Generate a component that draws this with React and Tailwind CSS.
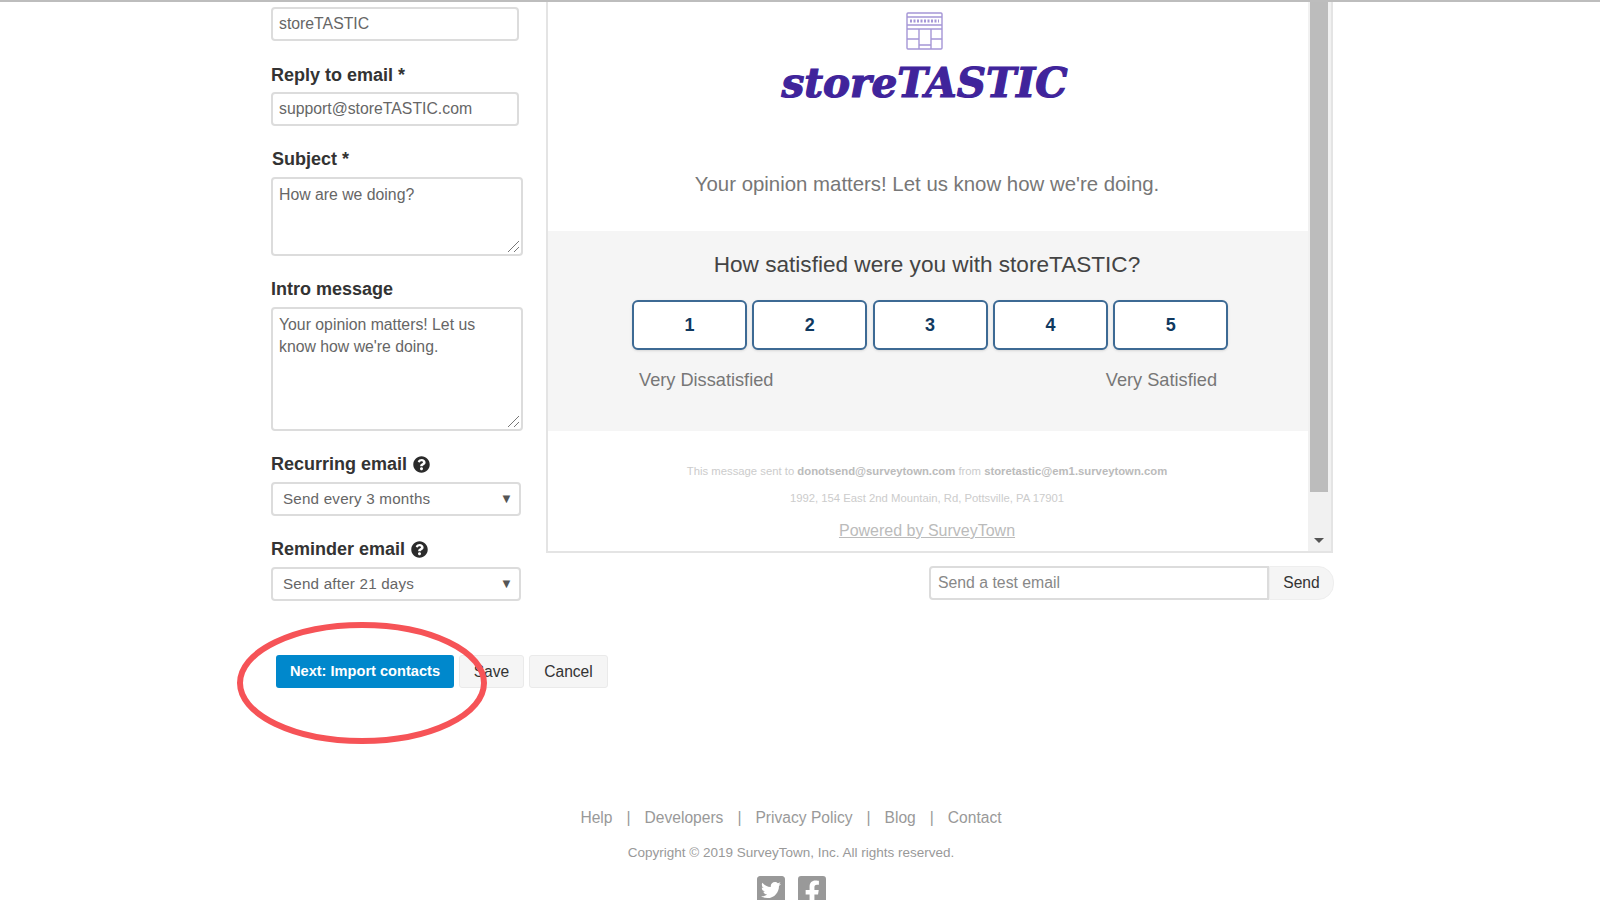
import { FaQuestionCircle, FaTwitterSquare, FaFacebookSquare } from "react-icons/fa";

const inputBox = "rounded border-2 border-[#dcdcdc] bg-white text-[15.8px] leading-[22px] text-[#666]";
const labelText = "text-[18px] leading-6 font-bold text-[#333]";

function StoreIcon() {
  return (
    <svg width="38" height="38" viewBox="0 0 38 38" fill="none" stroke="#a596d6" strokeWidth="1.4">
      <rect x="1" y="1" width="35" height="36" rx="1" />
      <path d="M1 5h35M1 13h35M1 17h35M13 17v20M25 17v20M1 27h12M25 27h11M13 33h12" />
      <path d="M4 9h29" strokeDasharray="2 1.5" strokeWidth="3" />
    </svg>
  );
}

function Resize() {
  return (
    <svg className="absolute bottom-[2px] right-[2px]" width="12" height="12" viewBox="0 0 12 12" stroke="#777" strokeWidth="1">
      <path d="M1 12L12 1M7 12l5-5" />
    </svg>
  );
}

function SelectBox({ children }) {
  return (
    <div className={`${inputBox} flex h-[34px] w-[250px] items-center justify-between pl-[10px] pr-[6px] !text-[15.2px] tracking-[0.2px]`}>
      <span>{children}</span>
      <span className="text-[13px] text-[#555]">▼</span>
    </div>
  );
}

export default function App() {
  return (
    <div className="relative h-[900px] w-[1600px] overflow-hidden border-t-2 border-[#bdbdbd] bg-white font-['Liberation_Sans',Arial,sans-serif]">
      <div className="flex pl-[271px]">
        <div className="w-[275px] pt-[5px]">
          <div className={`${inputBox} flex h-[34px] w-[248px] items-center px-[6px]`}>storeTASTIC</div>
          <div className={`${labelText} mt-[22px]`}>Reply to email *</div>
          <div className={`${inputBox} mt-[5px] flex h-[34px] w-[248px] items-center px-[6px]`}>support@storeTASTIC.com</div>
          <div className={`${labelText} ml-[1px] mt-[21px]`}>Subject *</div>
          <div className={`${inputBox} relative mt-[6px] h-[79px] w-[252px] px-[6px] py-[5px]`}>
            How are we doing?
            <Resize />
          </div>
          <div className={`${labelText} mt-[21px]`}>Intro message</div>
          <div className={`${inputBox} relative mt-[6px] h-[124px] w-[252px] px-[6px] py-[5px]`}>
            Your opinion matters! Let us know how we're doing.
            <Resize />
          </div>
          <div className={`${labelText} mt-[21px] flex items-center gap-[6px]`}>
            Recurring email <FaQuestionCircle size={17} className="text-[#2b2b2b]" />
          </div>
          <div className="mt-[6px]"><SelectBox>Send every 3 months</SelectBox></div>
          <div className={`${labelText} mt-[21px] flex items-center gap-[6px]`}>
            Reminder email <FaQuestionCircle size={17} className="text-[#2b2b2b]" />
          </div>
          <div className="mt-[6px]"><SelectBox>Send after 21 days</SelectBox></div>
        </div>

        <div className="w-[790px]">
          <div className="flex h-[551px] w-[787px] border-b-2 border-l-2 border-r-2 border-[#e4e4e4]">
            <div className="w-[760px] text-center">
              <div className="flex justify-center pt-[10px] pr-[7px]"><StoreIcon /></div>
              <div className="mt-[9px] pr-[7px] font-['DejaVu_Serif',serif] text-[40.6px] leading-[48px] font-bold text-[#40249b] italic [-webkit-text-stroke:1.2px_#40249b]">storeTASTIC</div>
              <p className="mt-[63px] pr-[2px] text-[20.4px] leading-7 text-[#777]">Your opinion matters! Let us know how we're doing.</p>
              <div className="mt-[33px] h-[200px] bg-[#f5f5f5] pt-[20px]">
                <h2 className="pr-[2px] text-[22.6px] leading-7 text-[#444]">How satisfied were you with storeTASTIC?</h2>
                <div className="mt-[21px] flex gap-[5.3px] pl-[84px]">
                  {[1, 2, 3, 4, 5].map((n) => (
                    <div key={n} className="flex h-[50px] w-[115px] items-center justify-center rounded-md border-2 border-[#3d6a94] bg-white text-[18px] font-bold text-[#10395f] shadow-sm">
                      {n}
                    </div>
                  ))}
                </div>
                <div className="mt-[18px] flex justify-between pl-[91px] pr-[91px] text-[18.2px] leading-6 text-[#777]">
                  <span>Very Dissatisfied</span>
                  <span>Very Satisfied</span>
                </div>
              </div>
              <p className="mt-[32px] pr-[2px] text-[11.3px] leading-4 text-[#ccc]">
                This message sent to <b className="text-[#bbb]">donotsend@surveytown.com</b> from <b className="text-[#bbb]">storetastic@em1.surveytown.com</b>
              </p>
              <p className="mt-[11px] pr-[2px] text-[11.3px] leading-4 text-[#ccc]">1992, 154 East 2nd Mountain, Rd, Pottsville, PA 17901</p>
              <p className="mt-[15px] pr-[2px] text-[16px] leading-5 text-[#bbb] underline">Powered by SurveyTown</p>
            </div>
            <div className="relative flex-1 bg-[#f1f1f1]">
              <div className="ml-[2px] h-[490px] w-[18px] bg-[#bcbcbc]" />
              <span className="absolute bottom-[8px] left-[6px] h-0 w-0 border-x-[5px] border-t-[5px] border-x-transparent border-t-[#555]" />
            </div>
          </div>
          <div className="mt-[13px] flex justify-end pr-[2px]">
            <div className={`${inputBox} flex h-[34px] w-[340px] items-center rounded-r-none px-[7px] !text-[#888]`}>Send a test email</div>
            <div className="flex h-[34px] w-[65px] items-center justify-center rounded-r-2xl border border-[#eee] bg-[#f5f5f5] text-[15.6px] text-[#333]">Send</div>
          </div>
        </div>
      </div>

      <div className="mt-[54px] flex gap-[5px] pl-[276px] text-[15.6px]">
        <div className="flex h-[33px] w-[178px] items-center justify-center rounded-[3px] bg-[#0088cc] text-[14.6px] font-bold text-white">Next: Import contacts</div>
        <div className="flex h-[33px] w-[65px] items-center justify-center rounded-[3px] border border-[#eaeaea] bg-[#f5f5f5] text-[#333]">Save</div>
        <div className="flex h-[33px] w-[79px] items-center justify-center rounded-[3px] border border-[#eaeaea] bg-[#f5f5f5] text-[#333]">Cancel</div>
      </div>

      <div className="mt-[120px] flex w-[1582px] flex-col items-center">
        <div className="flex gap-[14px] text-[15.6px] leading-5 text-[#999]">
          <span>Help</span><span>|</span><span>Developers</span><span>|</span><span>Privacy Policy</span><span>|</span><span>Blog</span><span>|</span><span>Contact</span>
        </div>
        <div className="mt-[15px] text-[13.5px] leading-5 text-[#999]">Copyright © 2019 SurveyTown, Inc. All rights reserved.</div>
        <div className="mt-[11px] flex gap-[9px] text-[#999]">
          <FaTwitterSquare size={32} />
          <FaFacebookSquare size={32} />
        </div>
      </div>

      {/* hand-drawn circle over the buttons */}
      <svg className="absolute left-[235px] top-[617px]" width="254" height="128" viewBox="0 0 254 128" fill="none">
        <ellipse cx="127" cy="64" rx="122" ry="58" stroke="#f65357" strokeWidth="6" />
      </svg>
    </div>
  );
}
